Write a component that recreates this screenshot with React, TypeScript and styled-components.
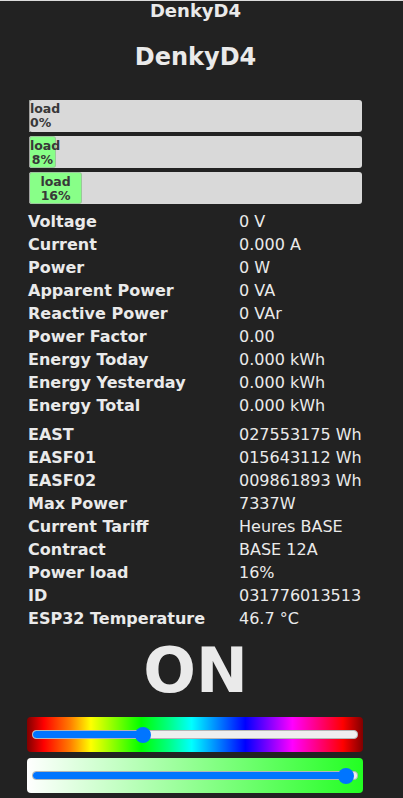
import React from "react";
import styled, { createGlobalStyle } from "styled-components";

const GlobalStyle = createGlobalStyle`
  html, body {
    margin: 0;
    padding: 0;
    background: #222222;
  }
  body {
    border-top: 1px solid #dcdcdc;
    font-family: "DejaVu Sans", Verdana, sans-serif;
    color: #eaeaea;
  }
`;

const Page = styled.div`
  width: 335px;
  padding-left: 28px;
  display: flex;
  flex-direction: column;
`;

const DeviceName = styled.div`
  font-size: 18px;
  line-height: 20px;
  font-weight: bold;
  text-align: center;
`;

const Heading = styled.h2`
  margin: 22px 0 29px;
  font-size: 24px;
  line-height: 28px;
  font-weight: bold;
  text-align: center;
`;

const Bars = styled.div`
  display: flex;
  flex-direction: column;
  gap: 4px;
  margin: 0 1px;
`;

const Bar = styled.div`
  height: 32px;
  background: #d9d9d9;
  border-radius: 3px;
  display: flex;
`;

const BarFill = styled.div<{ $empty: boolean }>`
  height: 100%;
  box-sizing: border-box;
  padding-top: 2px;
  background: #88ff88;
  border-radius: 3px;
  border: ${(p) => (p.$empty ? "none" : "1px solid #9ac79a")};
  border-left: 1px solid #a0a0a0;
  font-size: 12.5px;
  line-height: 14px;
  font-weight: bold;
  color: #383838;
  text-align: center;
  white-space: nowrap;
`;

const Table = styled.div`
  display: grid;
  grid-template-columns: 211px 1fr;
  margin-top: 6px;
  font-size: 16px;
  line-height: 23px;
`;

const Label = styled.div`
  font-weight: bold;
`;

const Value = styled.div`
  font-weight: normal;
`;

const State = styled.div`
  margin-top: 5px;
  font-size: 62px;
  line-height: 72px;
  font-weight: bold;
  text-align: center;
`;

const SliderBox = styled.div<{ $background: string }>`
  margin: 0 0 0 -1px;
  height: 35px;
  border-radius: 4px;
  background: ${(p) => p.$background};
  display: flex;
  align-items: center;
  padding: 0 5px;
`;

const Sliders = styled.div`
  display: flex;
  flex-direction: column;
  gap: 6px;
  margin-top: 10px;
`;

const Track = styled.div`
  position: relative;
  flex: 1;
  height: 7px;
  border-radius: 4px;
  background: #efefef;
  border: 1px solid #b5b5b5;
`;

const TrackFill = styled.div`
  height: 100%;
  border-radius: 4px 0 0 4px;
  background: #0075ff;
`;

const Thumb = styled.div`
  position: absolute;
  top: 50%;
  width: 16px;
  height: 16px;
  margin: -8px 0 0 -8px;
  border-radius: 50%;
  background: #0075ff;
`;

const HUE =
  "linear-gradient(to right, #800000 0%, #ff0000 5%, #ff8000 13%, #ffff00 19%, #00ff00 34%, #00ff80 42%, #00ffff 49%, #0080ff 57%, #0000ff 65%, #ff00ff 79%, #ff0066 88%, #ff0000 94%, #800000 100%)";
const BRIGHT = "linear-gradient(to right, #ffffff 0%, #22ff22 100%)";

const loads = [0, 8, 16];

const rows1: [string, string][] = [
  ["Voltage", "0 V"],
  ["Current", "0.000 A"],
  ["Power", "0 W"],
  ["Apparent Power", "0 VA"],
  ["Reactive Power", "0 VAr"],
  ["Power Factor", "0.00"],
  ["Energy Today", "0.000 kWh"],
  ["Energy Yesterday", "0.000 kWh"],
  ["Energy Total", "0.000 kWh"],
];

const rows2: [string, string][] = [
  ["EAST", "027553175 Wh"],
  ["EASF01", "015643112 Wh"],
  ["EASF02", "009861893 Wh"],
  ["Max Power", "7337W"],
  ["Current Tariff", "Heures BASE"],
  ["Contract", "BASE 12A"],
  ["Power load", "16%"],
  ["ID", "031776013513"],
  ["ESP32 Temperature", "46.7 °C"],
];

const Slider = ({ value, background }: { value: number; background: string }) => {
  // thumb travels inside the track, keep it off the very edges
  const pos = `calc(8px + (100% - 16px) * ${value / 100})`;
  return (
    <SliderBox $background={background}>
      <Track>
        <TrackFill style={{ width: pos }} />
        <Thumb style={{ left: pos }} />
      </Track>
    </SliderBox>
  );
};

const DataTable = ({ rows }: { rows: [string, string][] }) => (
  <Table>
    {rows.map(([k, v]) => (
      <React.Fragment key={k}>
        <Label>{k}</Label>
        <Value>{v}</Value>
      </React.Fragment>
    ))}
  </Table>
);

const App = () => {
  return (
    <>
      <GlobalStyle />
      <Page>
        <DeviceName>DenkyD4</DeviceName>
        <Heading>DenkyD4</Heading>
        <Bars>
          {loads.map((l) => (
            <Bar key={l}>
              <BarFill $empty={l === 0} style={{ width: `${l}%` }}>
                load
                <br />
                {l}%
              </BarFill>
            </Bar>
          ))}
        </Bars>
        <DataTable rows={rows1} />
        <DataTable rows={rows2} />
        <State>ON</State>
        <Sliders>
          <Slider value={33} background={HUE} />
          <Slider value={99} background={BRIGHT} />
        </Sliders>
      </Page>
    </>
  );
};

export default App;
